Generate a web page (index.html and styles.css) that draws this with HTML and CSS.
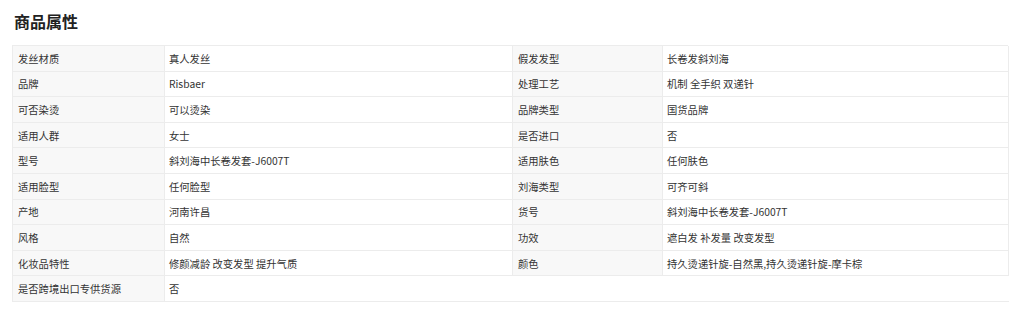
FILE: index.html
```html
<!DOCTYPE html>
<html lang="zh-CN">
<head>
<meta charset="utf-8">
<title>商品属性</title>
<link rel="stylesheet" href="styles.css">
</head>
<body>
<div class="wrap">
  <h2 class="title">商品属性</h2>
  <div class="props">
    <div class="k">发丝材质</div><div class="v">真人发丝</div>
    <div class="k">假发发型</div><div class="v">长卷发斜刘海</div>
    <div class="k">品牌</div><div class="v">Risbaer</div>
    <div class="k">处理工艺</div><div class="v">机制 全手织 双递针</div>
    <div class="k">可否染烫</div><div class="v">可以烫染</div>
    <div class="k">品牌类型</div><div class="v">国货品牌</div>
    <div class="k">适用人群</div><div class="v">女士</div>
    <div class="k">是否进口</div><div class="v">否</div>
    <div class="k">型号</div><div class="v">斜刘海中长卷发套-J6007T</div>
    <div class="k">适用肤色</div><div class="v">任何肤色</div>
    <div class="k">适用脸型</div><div class="v">任何脸型</div>
    <div class="k">刘海类型</div><div class="v">可齐可斜</div>
    <div class="k">产地</div><div class="v">河南许昌</div>
    <div class="k">货号</div><div class="v">斜刘海中长卷发套-J6007T</div>
    <div class="k">风格</div><div class="v">自然</div>
    <div class="k">功效</div><div class="v">遮白发 补发量 改变发型</div>
    <div class="k">化妆品特性</div><div class="v">修颜减龄 改变发型 提升气质</div>
    <div class="k">颜色</div><div class="v">持久烫递针旋-自然黑,持久烫递针旋-摩卡棕</div>
    <div class="k">是否跨境出口专供货源</div><div class="v last">否</div>
    <div class="empty"></div>
  </div>
</div>
</body>
</html>
```

FILE: styles.css
```css
html, body {
  margin: 0;
  padding: 0;
  background: #fff;
}

body {
  font-family: "Noto Sans CJK SC", "Noto Sans", sans-serif;
  color: #333;
}

.wrap {
  padding: 9px 0 0 12px;
}

.title {
  margin: 0 0 12px 2px;
  font-size: 16px;
  line-height: 24px;
  font-weight: 700;
  color: #222;
}

.props {
  display: grid;
  grid-template-columns: 152px 348px 150px 346px;
  grid-auto-rows: 25.6px;
  border-top: 1px solid #ececec;
  border-left: 1px solid #ececec;
  width: 996px;
  box-sizing: border-box;
  font-size: 10.3px;
}

.k, .v {
  box-sizing: border-box;
  border-right: 1px solid #ececec;
  border-bottom: 1px solid #ececec;
  padding: 0 5px;
  display: flex;
  align-items: center;
  white-space: nowrap;
  overflow: hidden;
  color: #333;
}

.k {
  background: #f8f8f8;
}

.v {
  padding-left: 4px;
  background: #fff;
}

.v.last {
  border-right: none;
}

.empty {
  grid-column: span 2;
  border-bottom: 1px solid #ececec;
}
```
